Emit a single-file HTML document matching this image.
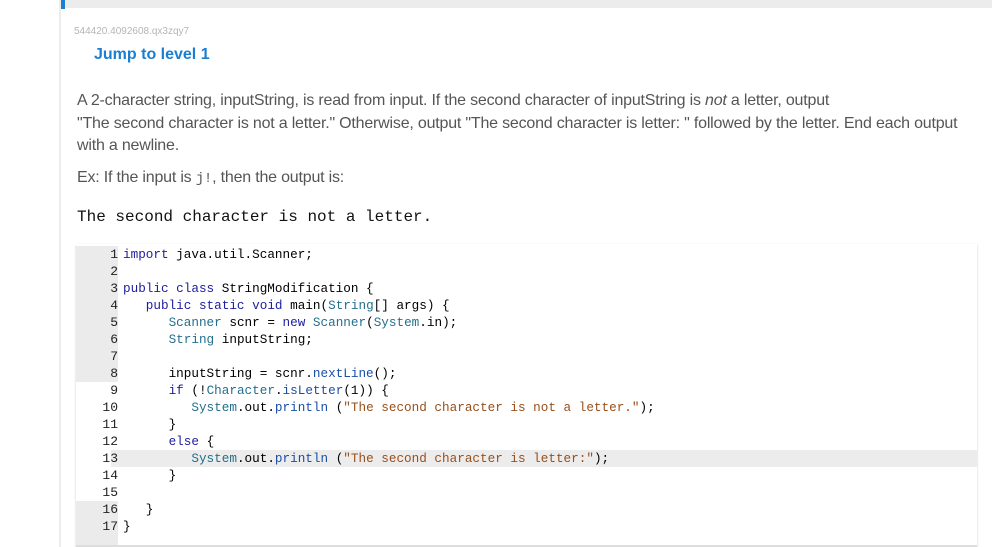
<!DOCTYPE html>
<html><head><meta charset="utf-8"><style>
body{margin:0;width:992px;height:547px;background:#fff;position:relative;overflow:hidden;font-family:"Liberation Sans",sans-serif;}
.top{position:absolute;left:60px;top:0;width:932px;height:8px;background:#ececec}
.mark{position:absolute;left:61px;top:0;width:4px;height:9px;background:#1b7fd1}
.vline{position:absolute;left:59px;top:0;width:2px;height:547px;background:#ececec}
.id{position:absolute;left:74px;top:26px;font-size:10px;color:#b5b5b5}
.jump{position:absolute;left:94px;top:46px;font-size:16px;font-weight:bold;color:#1b7fd1}
.p{position:absolute;left:77px;font-size:16px;color:#555;white-space:nowrap;letter-spacing:-0.2px}
.mono{font-family:"Liberation Mono",monospace}
.out{position:absolute;left:77px;top:208px;font-family:"Liberation Mono",monospace;font-size:16px;color:#111;white-space:pre}
.code{position:absolute;left:76px;top:244px;width:901px;height:301px;border-bottom:2px solid #ddd;box-shadow:0 1px 2px #ccc}
.ln{position:absolute;left:0;width:42px;height:17px;font-family:"Liberation Mono",monospace;font-size:13px;line-height:17px;text-align:right;color:#222}
.ln.g{background:#ebebeb}
.l{position:absolute;left:47px;height:17px;font-family:"Liberation Mono",monospace;font-size:12.67px;line-height:17px;white-space:pre;color:#000}
.k{color:#1d1da0}.t{color:#23708c}.s{color:#9a4f1a}.m{color:#1a4fa8}
.hl{position:absolute;left:35px;top:206px;width:866px;height:17px;background:#ececec}
</style></head><body>
<div class="top"></div><div class="vline"></div><div class="mark"></div>
<div class="id">544420.4092608.qx3zqy7</div>
<div class="jump">Jump to level 1</div>
<div class="p" style="top:92px">A 2-character string, inputString, is read from input. If the second character of inputString is <i>not</i> a letter, output</div>
<div class="p" style="top:115px">"The second character is not a letter." Otherwise, output "The second character is letter: " followed by the letter. End each output</div>
<div class="p" style="top:137px">with a newline.</div>
<div class="p" style="top:169px">Ex: If the input is <span class="mono" style="font-size:14px">j!</span>, then the output is:</div>
<div class="out">The second character is not a letter.</div>
<div class="code">
<div class="hl"></div>
<div class="ln g" style="top:2px">1</div><div class="ln g" style="top:19px">2</div><div class="ln g" style="top:36px">3</div><div class="ln g" style="top:53px">4</div><div class="ln g" style="top:70px">5</div><div class="ln g" style="top:87px">6</div><div class="ln g" style="top:104px">7</div><div class="ln g" style="top:121px">8</div>
<div class="ln" style="top:138px">9</div><div class="ln" style="top:155px">10</div><div class="ln" style="top:172px">11</div><div class="ln" style="top:189px">12</div><div class="ln" style="top:206px">13</div><div class="ln" style="top:223px">14</div><div class="ln" style="top:240px">15</div>
<div class="ln g" style="top:257px;height:44px">16</div><div class="ln" style="top:274px">17</div>
<div class="l" style="top:2px"><span class="k">import</span> java.util.Scanner;</div>
<div class="l" style="top:36px"><span class="k">public class</span> StringModification {</div>
<div class="l" style="top:53px">   <span class="k">public static void</span> main(<span class="t">String</span>[] args) {</div>
<div class="l" style="top:70px">      <span class="t">Scanner</span> scnr = <span class="k">new</span> <span class="t">Scanner</span>(<span class="t">System</span>.in);</div>
<div class="l" style="top:87px">      <span class="t">String</span> inputString;</div>
<div class="l" style="top:121px">      inputString = scnr.<span class="m">nextLine</span>();</div>
<div class="l" style="top:138px">      <span class="k">if</span> (!<span class="t">Character</span>.<span class="m">isLetter</span>(1)) {</div>
<div class="l" style="top:155px">         <span class="t">System</span>.out.<span class="m">println</span> (<span class="s">"The second character is not a letter."</span>);</div>
<div class="l" style="top:172px">      }</div>
<div class="l" style="top:189px">      <span class="k">else</span> {</div>
<div class="l" style="top:206px">         <span class="t">System</span>.out.<span class="m">println</span> (<span class="s">"The second character is letter:"</span>);</div>
<div class="l" style="top:223px">      }</div>
<div class="l" style="top:257px">   }</div>
<div class="l" style="top:274px">}</div>
</div>
</body></html>
